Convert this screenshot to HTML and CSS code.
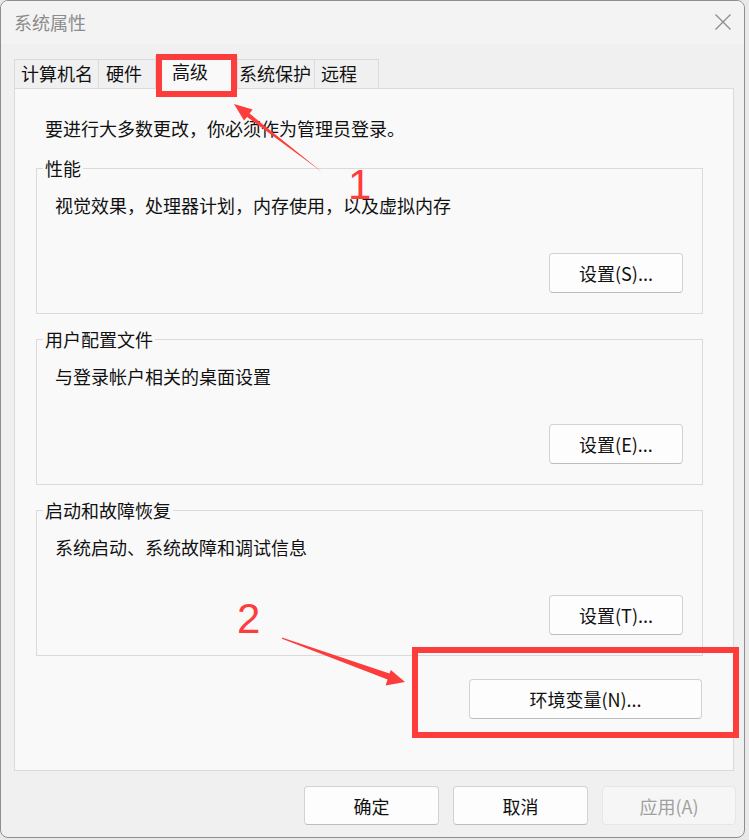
FILE: index.html
```html
<!DOCTYPE html>
<html lang="zh-CN">
<head>
<meta charset="utf-8">
<title>系统属性</title>
<link rel="stylesheet" href="styles.css">
</head>
<body>
<div class="window">
  <div class="titlebar">
    <span class="title">系统属性</span>
    <svg class="close" width="18" height="18" viewBox="0 0 18 18"><path d="M1.5 1.5 L16.5 16.5 M16.5 1.5 L1.5 16.5" stroke="#8c8c8c" stroke-width="1.3" fill="none"/></svg>
  </div>
  <div class="tabs">
    <div class="tab t1">计算机名</div>
    <div class="tab t2">硬件</div>
    <div class="tab t3 active">高级</div>
    <div class="tab t4">系统保护</div>
    <div class="tab t5">远程</div>
  </div>
  <div class="panel">
    <p class="intro">要进行大多数更改，你必须作为管理员登录。</p>
    <div class="group first">
      <div class="legend">性能</div>
      <div class="desc">视觉效果，处理器计划，内存使用，以及虚拟内存</div>
      <button class="btn set">设置(S)...</button>
    </div>
    <div class="group">
      <div class="legend">用户配置文件</div>
      <div class="desc">与登录帐户相关的桌面设置</div>
      <button class="btn set">设置(E)...</button>
    </div>
    <div class="group">
      <div class="legend">启动和故障恢复</div>
      <div class="desc">系统启动、系统故障和调试信息</div>
      <button class="btn set">设置(T)...</button>
    </div>
    <div class="envrow">
      <button class="btn env">环境变量(N)...</button>
    </div>
  </div>
  <div class="footer">
    <button class="btn foot">确定</button>
    <button class="btn foot">取消</button>
    <button class="btn foot disabled">应用(A)</button>
  </div>
</div>
<svg class="annot" width="749" height="840" viewBox="0 0 749 840">
  <rect x="159" y="57" width="75" height="37" fill="none" stroke="#fd3c3c" stroke-width="6"/>
  <rect x="415" y="650" width="321" height="85" fill="none" stroke="#fd3c3c" stroke-width="6"/>
  <polygon points="322,172 249.6,113.6 252.6,109.4 234,104 244,120.6 247.1,116.9" fill="#fd3c3c"/>
  <polygon points="282,637.5 389.5,673.5 390.8,670 405,682 385.6,685.5 387.6,679.5 282,638.8" fill="#fd3c3c"/>
  <text x="348" y="199" class="num">1</text>
  <text x="237" y="633" class="num">2</text>
</svg>
</body>
</html>
```
FILE: styles.css
```css
html, body {
  margin: 0;
  padding: 0;
}
body {
  width: 749px;
  height: 840px;
  background: #e9e9e9;
  position: relative;
  overflow: hidden;
  font-family: "Noto Sans CJK SC", "Noto Sans", sans-serif;
  color: #111;
}
.window {
  width: 745px;
  height: 838px;
  box-sizing: border-box;
  border: 1px solid #8e8e8e;
  border-radius: 8px;
  background: #f0f0f0;
  display: flex;
  flex-direction: column;
  overflow: hidden;
}
.titlebar {
  height: 43px;
  flex: none;
  background: #f3f3f3;
  display: flex;
  align-items: center;
  justify-content: space-between;
  padding: 0 12px 0 13px;
}
.title {
  font-size: 18px;
  line-height: 22px;
  color: #8c8c8c;
  margin-top: -1px;
}
.close {
  display: block;
  margin-top: -1px;
}
.tabs {
  flex: none;
  height: 44px;
  display: flex;
  align-items: flex-end;
  padding-left: 13px;
  position: relative;
  z-index: 1;
}
.tab {
  box-sizing: border-box;
  height: 29px;
  border: 1px solid #dadada;
  border-bottom: none;
  margin-right: -1px;
  background: #f0f0f0;
  font-size: 18px;
  line-height: 27px;
  padding-left: 6px;
  white-space: nowrap;
}
.t1 { width: 85px; }
.t2 { width: 58px; padding-left: 7px; }
.t3 { width: 83px; padding-left: 16px; }
.t4 { width: 78px; padding-left: 1px; }
.t5 { width: 65px; padding-left: 6px; }
.tab.active {
  height: 33px;
  margin-bottom: -1px;
  background: #f9f9f9;
  line-height: 28px;
  position: relative;
}
.panel {
  flex: none;
  box-sizing: border-box;
  height: 683px;
  margin: 0 10px 0 13px;
  border: 1px solid #dadada;
  background: #f9f9f9;
  padding: 27px 30px 0 21px;
}
.intro {
  margin: 0 0 0 9px;
  font-size: 18px;
  line-height: 24px;
}
.group {
  box-sizing: border-box;
  height: 146px;
  border: 1px solid #dadada;
  margin-top: 25px;
  display: flex;
  flex-direction: column;
  align-items: flex-start;
}
.group.first {
  margin-top: 28px;
}
.legend {
  margin: -12px 0 0 6px;
  padding: 0 2px;
  background: #f9f9f9;
  font-size: 18px;
  line-height: 22px;
}
.desc {
  margin: 15px 0 0 18px;
  font-size: 18px;
  line-height: 22px;
}
.btn {
  box-sizing: border-box;
  font-family: "Noto Sans CJK SC", "Noto Sans", sans-serif;
  font-size: 18px;
  color: #111;
  background: #fdfdfd;
  border: 1px solid #d2d2d2;
  border-bottom-color: #bdbdbd;
  border-radius: 4px;
  padding: 0;
  line-height: 20px;
}
.set {
  width: 134px;
  height: 40px;
  align-self: flex-end;
  margin: auto 19px 20px 0;
}
.envrow {
  display: flex;
  justify-content: flex-end;
  padding-right: 1px;
  margin-top: 23px;
}
.env {
  width: 233px;
  height: 40px;
}
.footer {
  flex: none;
  display: flex;
  justify-content: flex-end;
  gap: 14px;
  padding: 15px 8px 0 0;
}
.foot {
  width: 135px;
  height: 39px;
}
.foot.disabled {
  width: 134px;
  background: #f6f6f6;
  border-color: #e6e6e6;
  color: #a0a0a0;
}
.annot {
  position: absolute;
  left: 0;
  top: 0;
  z-index: 10;
  pointer-events: none;
}
.num {
  font-family: "Liberation Sans", Arial, sans-serif;
  font-size: 42px;
  fill: #fd3c3c;
}
```
